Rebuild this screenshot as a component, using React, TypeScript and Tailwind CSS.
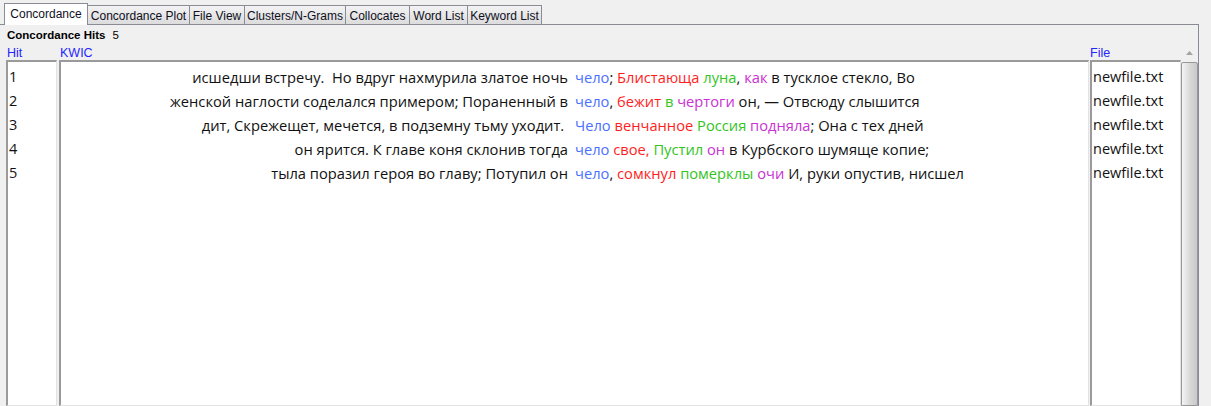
import React from 'react';

type Seg = { t: string; c?: 'b' | 'r' | 'g' | 'm' };

interface Hit {
  n: number;
  left: string;
  right: Seg[];
  file: string;
}

const HITS: Hit[] = [
  {
    n: 1,
    left: 'исшедши встречу.  Но вдруг нахмурила златое ночь',
    right: [
      { t: 'чело', c: 'b' },
      { t: '; ' },
      { t: 'Блистающа', c: 'r' },
      { t: ' ' },
      { t: 'луна', c: 'g' },
      { t: ', ' },
      { t: 'как', c: 'm' },
      { t: ' в тусклое стекло, Во' },
    ],
    file: 'newfile.txt',
  },
  {
    n: 2,
    left: 'женской наглости соделался примером; Пораненный в',
    right: [
      { t: 'чело', c: 'b' },
      { t: ', ' },
      { t: 'бежит', c: 'r' },
      { t: ' ' },
      { t: 'в', c: 'g' },
      { t: ' ' },
      { t: 'чертоги', c: 'm' },
      { t: ' он, — Отвсюду слышится' },
    ],
    file: 'newfile.txt',
  },
  {
    n: 3,
    left: 'дит, Скрежещет, мечется, в подземну тьму уходит. ',
    right: [
      { t: 'Чело', c: 'b' },
      { t: ' ' },
      { t: 'венчанное', c: 'r' },
      { t: ' ' },
      { t: 'Россия', c: 'g' },
      { t: ' ' },
      { t: 'подняла', c: 'm' },
      { t: '; Она с тех дней' },
    ],
    file: 'newfile.txt',
  },
  {
    n: 4,
    left: 'он ярится. К главе коня склонив тогда',
    right: [
      { t: 'чело', c: 'b' },
      { t: ' ' },
      { t: 'свое,', c: 'r' },
      { t: ' ' },
      { t: 'Пустил', c: 'g' },
      { t: ' ' },
      { t: 'он', c: 'm' },
      { t: ' в Курбского шумяще копие;' },
    ],
    file: 'newfile.txt',
  },
  {
    n: 5,
    left: 'тыла поразил героя во главу; Потупил он',
    right: [
      { t: 'чело', c: 'b' },
      { t: ', ' },
      { t: 'сомкнул', c: 'r' },
      { t: ' ' },
      { t: 'померклы', c: 'g' },
      { t: ' ' },
      { t: 'очи', c: 'm' },
      { t: ' И, руки опустив, нисшел' },
    ],
    file: 'newfile.txt',
  },
];

const TABS = [
  { label: 'Concordance', w: 'w-[84px]' },
  { label: 'Concordance Plot', w: 'w-[103px]' },
  { label: 'File View', w: 'w-[56px]' },
  { label: 'Clusters/N-Grams', w: 'w-[102px]' },
  { label: 'Collocates', w: 'w-[65px]' },
  { label: 'Word List', w: 'w-[59px]' },
  { label: 'Keyword List', w: 'w-[75px]' },
];

const segColor = (c?: Seg['c']) => {
  if (c === 'b') return 'text-[#4c6fff]';
  if (c === 'r') return 'text-[#ff1e1e]';
  if (c === 'g') return 'text-[#33c41e]';
  if (c === 'm') return 'text-[#c832d2]';
  return 'text-[#111111]';
};

const boxCls =
  'flex-1 bg-white border-t-2 border-l-2 border-r border-b border-t-[#9a9a9a] border-l-[#9a9a9a] border-r-[#e3e3e3] border-b-[#e3e3e3]';

export default function App() {
  return (
    <div className="w-[1211px] h-[406px] overflow-hidden bg-[#f0f0f0] flex flex-col font-['Liberation_Sans',Arial,sans-serif]">
      {/* Tabs */}
      <div className="flex items-end h-[24px] pl-[4px] text-[12px] text-[#0f0f1e]">
        {TABS.map((tab, i) =>
          i === 0 ? (
            <div
              key={tab.label}
              className={`${tab.w} relative z-10 h-[22px] -mb-px bg-white border-t border-l border-r border-[#898c95] flex items-center justify-center pb-[2px]`}
            >
              {tab.label}
            </div>
          ) : (
            <div
              key={tab.label}
              className={`${tab.w} -ml-px h-[19px] bg-gradient-to-b from-[#f3f3f3] to-[#dcdcdc] border-t border-l border-r border-[#898c95] flex items-center justify-center pt-[1px]`}
            >
              {tab.label}
            </div>
          )
        )}
      </div>

      {/* Panel */}
      <div className="flex-1 mr-[12px] border-t border-r border-[#898c95] flex flex-col">
        <div className="h-[21px] leading-[21px] pl-[7px] text-[11.5px] text-black flex">
          <span className="font-bold">Concordance Hits</span>
          <span className="ml-[7px]">5</span>
        </div>

        <div className="flex-1 flex pl-[6px]">
          {/* Hit column */}
          <div className="w-[51px] flex flex-col">
            <div className="h-[14px] leading-[14px] text-[12.5px] text-[#2525ff] pl-[1px]">Hit</div>
            <div className={`${boxCls} pt-[3px] pl-[1px] font-['Open_Sans',sans-serif] text-[14.5px] text-[#111111]`}>
              {HITS.map((h) => (
                <div key={h.n} className="h-[24px] leading-[24px]">
                  {h.n}
                </div>
              ))}
            </div>
          </div>

          {/* KWIC column */}
          <div className="w-[1030px] ml-[2px] flex flex-col">
            <div className="h-[14px] leading-[14px] text-[12.5px] text-[#2525ff] pl-[1px]">KWIC</div>
            <div className={`${boxCls} pt-[3px] font-['Open_Sans',sans-serif] text-[14.7px]`}>
              {HITS.map((h) => (
                <div key={h.n} className="h-[24px] leading-[24px] flex whitespace-pre">
                  <div className="w-[507px] text-right text-[#111111]">{h.left}</div>
                  <div className="ml-[7px]">
                    {h.right.map((s, i) => (
                      <span key={i} className={segColor(s.c)}>
                        {s.t}
                      </span>
                    ))}
                  </div>
                </div>
              ))}
            </div>
          </div>

          {/* File column */}
          <div className="w-[91px] ml-px flex flex-col">
            <div className="h-[14px] leading-[14px] text-[12.5px] text-[#2525ff]">File</div>
            <div className={`${boxCls} pt-[3px] pl-[1px] font-['Open_Sans',sans-serif] text-[14.5px] text-[#111111]`}>
              {HITS.map((h) => (
                <div key={h.n} className="h-[24px] leading-[24px]">
                  {h.file}
                </div>
              ))}
            </div>
          </div>

          {/* Scrollbar */}
          <div className="w-[17px] -mt-[2px] flex flex-col">
            <div className="h-[17px] flex items-center justify-center">
              <svg width="7" height="4" viewBox="0 0 7 4">
                <path d="M0 4 L3.5 0 L7 4 Z" fill="#a3a3a3" />
              </svg>
            </div>
            <div className="flex-1 mt-[1px] border border-[#979797] rounded-t-[2px] bg-gradient-to-r from-[#f4f4f4] via-[#dadada] to-[#c9c9c9]" />
          </div>
        </div>
      </div>
    </div>
  );
}
